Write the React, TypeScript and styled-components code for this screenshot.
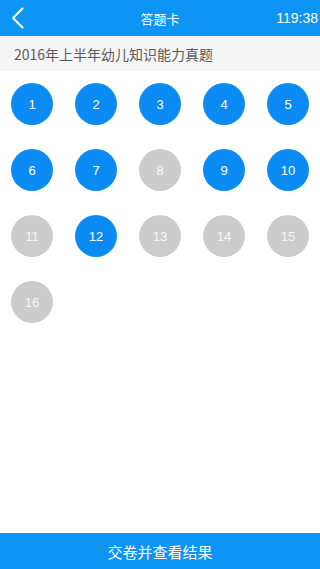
import styled, { createGlobalStyle } from "styled-components";

const GlobalStyle = createGlobalStyle`
    html, body {
        margin: 0;
        padding: 0;
        background: #ffffff;
    }
    body {
        font-family: "Noto Sans", "Noto Sans CJK SC", sans-serif;
    }
`;

const Page = styled.div`
    width: 320px;
    height: 569px;
    display: flex;
    flex-direction: column;
    background: #ffffff;
`;

const Header = styled.header`
    height: 36px;
    background-color: #0d95f5;
    display: grid;
    grid-template-columns: 60px 1fr 60px;
    align-items: center;
    color: #ffffff;
`;

const BackButton = styled.button`
    display: flex;
    align-items: center;
    background: transparent;
    border: none;
    padding: 0 0 0 11px;
    height: 36px;
    cursor: pointer;
`;

const Title = styled.h1`
    margin: 0;
    text-align: center;
    font-size: 13px;
    font-weight: normal;
    font-family: "Noto Sans CJK SC", sans-serif;
`;

const Timer = styled.span`
    text-align: right;
    padding-right: 2px;
    font-size: 14px;
    font-family: "Liberation Sans", Arial, sans-serif;
`;

const SubTitle = styled.div`
    height: 35px;
    background-color: #f5f5f5;
    display: flex;
    align-items: center;
    padding-left: 14px;
    font-size: 14px;
    color: #5a5a5a;
    font-family: "Noto Sans CJK SC", sans-serif;
`;

const Grid = styled.div`
    flex: 1;
    display: grid;
    grid-template-columns: repeat(5, 64px);
    grid-auto-rows: 42px;
    row-gap: 24px;
    align-content: start;
    padding-top: 12px;
`;

const Bubble = styled.div<{ $answered: boolean }>`
    width: 42px;
    height: 42px;
    border-radius: 50%;
    justify-self: center;
    display: flex;
    align-items: center;
    justify-content: center;
    background-color: ${(p) => (p.$answered ? "#0a8bf3" : "#cccccc")};
    color: ${(p) => (p.$answered ? "#ffffff" : "#f7f7f7")};
    font-size: 13px;
    font-family: "Liberation Sans", Arial, sans-serif;
`;

const SubmitButton = styled.button`
    height: 36px;
    border: none;
    background-color: #0d95f5;
    color: #ffffff;
    font-size: 15px;
    font-family: "Noto Sans CJK SC", sans-serif;
    cursor: pointer;
`;

const answered = [1, 2, 3, 4, 5, 6, 7, 9, 10, 12];

export default function App() {
    const items = Array.from({ length: 16 }, (_, i) => i + 1);
    return (
        <Page>
            <GlobalStyle />
            <Header>
                <BackButton aria-label="back">
                    <svg width="13" height="22" viewBox="0 0 13 22">
                        <path d="M11.5 1.5 L2 11 L11.5 20.5" fill="none" stroke="#ffffff" strokeWidth="2" strokeLinecap="round" strokeLinejoin="round" />
                    </svg>
                </BackButton>
                <Title>答题卡</Title>
                <Timer>119:38</Timer>
            </Header>
            <SubTitle>2016年上半年幼儿知识能力真题</SubTitle>
            <Grid>
                {items.map((n) => (
                    <Bubble key={n} $answered={answered.includes(n)}>{n}</Bubble>
                ))}
            </Grid>
            <SubmitButton>交卷并查看结果</SubmitButton>
        </Page>
    );
}
